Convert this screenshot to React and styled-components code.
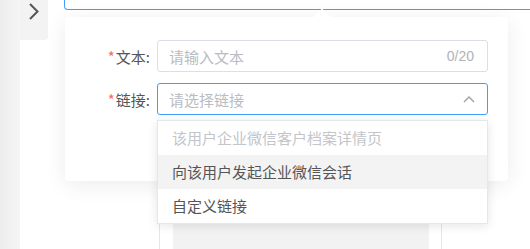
import React from "react";
import styled, { createGlobalStyle } from "styled-components";

const GlobalStyle = createGlobalStyle`
  html, body {
    margin: 0;
    padding: 0;
    background: #fff;
    overflow: hidden;
  }
  body {
    font-family: "Noto Sans CJK SC", "Noto Sans", sans-serif;
  }
`;

const Page = styled.div`
  display: flex;
  width: 530px;
  height: 249px;
  overflow: hidden;
`;
const Rail = styled.div`
  width: 20px;
  flex-shrink: 0;
  background: linear-gradient(to right, #ededee, #f5f5f6);
`;
const TabColumn = styled.div`
  width: 28px;
  flex-shrink: 0;
`;
const SideTab = styled.div`
  height: 40px;
  background: #f3f3f4;
  border-bottom-right-radius: 4px;
  display: flex;
  justify-content: center;
  padding-top: 3px;
  box-sizing: border-box;
`;
const Main = styled.div`
  flex: 1;
  padding-left: 16px;
  display: flex;
  flex-direction: column;
`;
const TopBox = styled.div`
  width: 480px;
  height: 10px;
  box-sizing: border-box;
  border: 1px solid #409eff;
  border-top: none;
  border-bottom-left-radius: 4px;
  background: #fff;
  flex-shrink: 0;
`;
const Card = styled.div`
  position: relative;
  margin: 7px 0 0 1px;
  width: 443px;
  height: 164px;
  box-sizing: border-box;
  padding: 23px 20px 0 0;
  background: #fff;
  border-radius: 4px;
  box-shadow: 0 4px 22px rgba(0, 0, 0, 0.08);
  display: flex;
  flex-direction: column;
  gap: 11px;
  flex-shrink: 0;
  z-index: 2;
`;
const Arrow = styled.div`
  position: absolute;
  top: -6px;
  left: 251px;
  width: 12px;
  height: 12px;
  background: #fff;
  transform: rotate(45deg);
`;
const FormRow = styled.div`
  display: flex;
  align-items: center;
  height: 32px;
`;
const Label = styled.label`
  width: 92px;
  padding-right: 7px;
  box-sizing: border-box;
  text-align: right;
  font-size: 15px;
  color: #555;
  flex-shrink: 0;
`;
const Star = styled.span`
  color: #f56c6c;
  margin-right: 1px;
`;
const Field = styled.div`
  position: relative;
  flex: 1;
  height: 32px;
  box-sizing: border-box;
  border: 1px solid ${(p) => (p.$focused ? "#409eff" : "#dcdfe6")};
  border-radius: 3px;
  display: flex;
  align-items: center;
  padding: 0 12px 0 11px;
  font-size: 15px;
`;
const Placeholder = styled.span`
  flex: 1;
  color: #b9bcc2;
`;
const Counter = styled.span`
  font-size: 14px;
  color: #b0b3b8;
  font-family: "Liberation Sans", Arial, sans-serif;
  margin-right: 1px;
`;
const Dropdown = styled.ul`
  position: absolute;
  top: calc(100% + 6px);
  left: -1px;
  right: -1px;
  margin: 0;
  padding: 0;
  list-style: none;
  background: #fff;
  border: 1px solid #e4e7ed;
  box-shadow: 0 2px 10px rgba(0, 0, 0, 0.1);
  z-index: 5;
`;
const Option = styled.li`
  height: 34px;
  line-height: 34px;
  padding-left: 14px;
  font-size: 15px;
  color: ${(p) => (p.$disabled ? "#c3c5ca" : "#555")};
  background: ${(p) => (p.$hover ? "#f3f3f3" : "#fff")};
`;
const PhoneFrame = styled.div`
  margin: 14px 0 0 95px;
  width: 283px;
  flex: 1;
  box-sizing: border-box;
  border-left: 1px solid #e6e6e6;
  border-right: 1px solid #e6e6e6;
  padding: 0 12px 0 13px;
  background: #fff;
`;
const PhoneScreen = styled.div`
  height: 100%;
  background: #f2f2f2;
`;

const options = [
  { text: "该用户企业微信客户档案详情页", disabled: true },
  { text: "向该用户发起企业微信会话", hover: true },
  { text: "自定义链接" },
];

export default function App() {
  return (
    <>
      <GlobalStyle />
      <Page>
        <Rail />
        <TabColumn>
          <SideTab>
            <svg width="12" height="17" viewBox="0 0 12 17">
              <polyline
                points="2,1 9.5,8.5 2,16"
                fill="none"
                stroke="#555"
                strokeWidth="2"
              />
            </svg>
          </SideTab>
        </TabColumn>
        <Main>
          <TopBox />
          <Card>
            <Arrow />
            <FormRow>
              <Label>
                <Star>*</Star>文本:
              </Label>
              <Field>
                <Placeholder>请输入文本</Placeholder>
                <Counter>0/20</Counter>
              </Field>
            </FormRow>
            <FormRow>
              <Label>
                <Star>*</Star>链接:
              </Label>
              <Field $focused>
                <Placeholder>请选择链接</Placeholder>
                <svg width="12" height="8" viewBox="0 0 12 8">
                  <polyline
                    points="1,7 6,2 11,7"
                    fill="none"
                    stroke="#a3a6ab"
                    strokeWidth="1.5"
                  />
                </svg>
                <Dropdown>
                  {options.map((o) => (
                    <Option key={o.text} $disabled={o.disabled} $hover={o.hover}>
                      {o.text}
                    </Option>
                  ))}
                </Dropdown>
              </Field>
            </FormRow>
          </Card>
          <PhoneFrame>
            <PhoneScreen />
          </PhoneFrame>
        </Main>
      </Page>
    </>
  );
}
